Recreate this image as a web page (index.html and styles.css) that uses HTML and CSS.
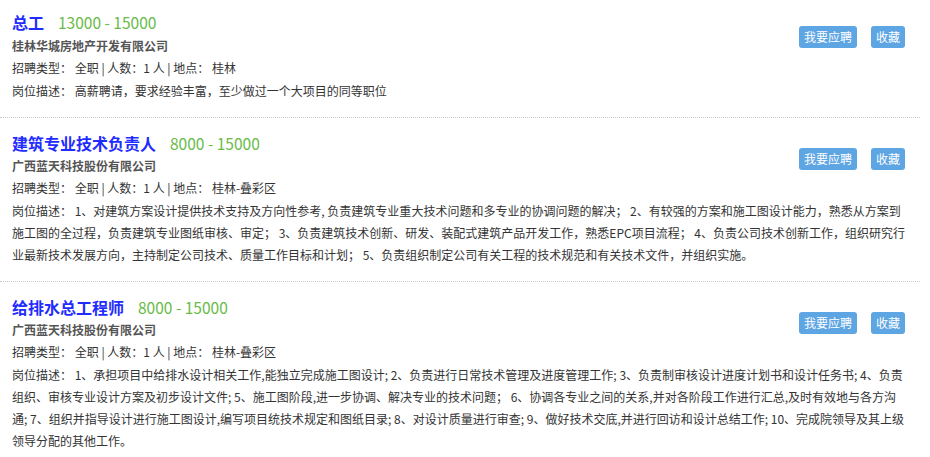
FILE: index.html
```html
<!DOCTYPE html>
<html lang="zh-CN">
<head>
    <meta charset="UTF-8">
    <meta name="viewport" content="width=device-width, initial-scale=1.0">
    <title>职位列表</title>
    <link rel="stylesheet" href="styles.css">
</head>
<body>

    <div class="job-list">

        <div class="job">
            <div class="job-head">
                <div class="job-info">
                    <div class="job-title">
                        <a href="#" class="name">总工</a>
                        <span class="salary">13000 - 15000</span>
                    </div>
                    <div class="company">桂林华城房地产开发有限公司</div>
                    <div class="meta">招聘类型： 全职 | 人数：1 人 | 地点： 桂林</div>
                </div>
                <div class="actions">
                    <button class="btn">我要应聘</button>
                    <button class="btn">收藏</button>
                </div>
            </div>
            <div class="desc">岗位描述： 高薪聘请，要求经验丰富，至少做过一个大项目的同等职位</div>
        </div>

        <div class="job">
            <div class="job-head">
                <div class="job-info">
                    <div class="job-title">
                        <a href="#" class="name">建筑专业技术负责人</a>
                        <span class="salary">8000 - 15000</span>
                    </div>
                    <div class="company">广西蓝天科技股份有限公司</div>
                    <div class="meta">招聘类型： 全职 | 人数：1 人 | 地点： 桂林-叠彩区</div>
                </div>
                <div class="actions">
                    <button class="btn">我要应聘</button>
                    <button class="btn">收藏</button>
                </div>
            </div>
            <div class="desc">岗位描述： 1、对建筑方案设计提供技术支持及方向性参考, 负责建筑专业重大技术问题和多专业的协调问题的解决； 2、有较强的方案和施工图设计能力，熟悉从方案到施工图的全过程，负责建筑专业图纸审核、审定； 3、负责建筑技术创新、研发、装配式建筑产品开发工作，熟悉EPC项目流程； 4、负责公司技术创新工作，组织研究行业最新技术发展方向，主持制定公司技术、质量工作目标和计划； 5、负责组织制定公司有关工程的技术规范和有关技术文件，并组织实施。</div>
        </div>

        <div class="job">
            <div class="job-head">
                <div class="job-info">
                    <div class="job-title">
                        <a href="#" class="name">给排水总工程师</a>
                        <span class="salary">8000 - 15000</span>
                    </div>
                    <div class="company">广西蓝天科技股份有限公司</div>
                    <div class="meta">招聘类型： 全职 | 人数：1 人 | 地点： 桂林-叠彩区</div>
                </div>
                <div class="actions">
                    <button class="btn">我要应聘</button>
                    <button class="btn">收藏</button>
                </div>
            </div>
            <div class="desc">岗位描述： 1、承担项目中给排水设计相关工作,能独立完成施工图设计; 2、负责进行日常技术管理及进度管理工作; 3、负责制审核设计进度计划书和设计任务书; 4、负责组织、审核专业设计方案及初步设计文件; 5、施工图阶段,进一步协调、解决专业的技术问题； 6、协调各专业之间的关系,并对各阶段工作进行汇总,及时有效地与各方沟通; 7、组织并指导设计进行施工图设计,编写项目统技术规定和图纸目录; 8、对设计质量进行审查; 9、做好技术交底,并进行回访和设计总结工作; 10、完成院领导及其上级领导分配的其他工作。</div>
        </div>

    </div>

</body>
</html>
```

FILE: styles.css
```css
:root {
    --title-blue: #1f2cff;
    --salary-green: #68bb48;
    --btn-blue: #5ea5e3;
    --text: #333;
}

* {
    margin: 0;
    padding: 0;
    box-sizing: border-box;
}

body {
    background-color: #fff;
    font-family: "Noto Sans CJK SC", "Noto Sans", sans-serif;
    font-size: 12px;
    color: var(--text);
}

.job-list {
    width: 920px;
}

.job {
    padding: 13px 10px 15px 12px;
    border-bottom: 1px dotted #c8c8c8;
}

.job:first-child {
    padding-top: 10px;
}

.job:last-child {
    border-bottom: none;
}

.job-head {
    display: flex;
    justify-content: space-between;
    align-items: flex-start;
}

.job-title {
    display: flex;
    align-items: baseline;
    gap: 14px;
    line-height: 24px;
}

.job-title .name {
    font-size: 16px;
    font-weight: bold;
    color: var(--title-blue);
    text-decoration: none;
}

.job-title .salary {
    font-size: 15.5px;
    color: var(--salary-green);
}

.company {
    font-weight: bold;
    color: #555;
    line-height: 22px;
}

.job:first-child .company {
    margin-top: 1px;
}

.meta,
.desc {
    line-height: 22px;
}

.desc {
    margin-top: 1px;
}

.actions {
    display: flex;
    gap: 14px;
    margin-top: 17px;
    margin-right: 5px;
}

.job:first-child .actions {
    margin-top: 16px;
}

.btn {
    height: 22px;
    padding: 0 5px;
    background-color: var(--btn-blue);
    color: #fff;
    border: none;
    border-radius: 3px;
    font-family: inherit;
    font-size: 12px;
    line-height: 22px;
    cursor: pointer;
}

.btn:hover {
    background-color: #4a92d2;
}
```
